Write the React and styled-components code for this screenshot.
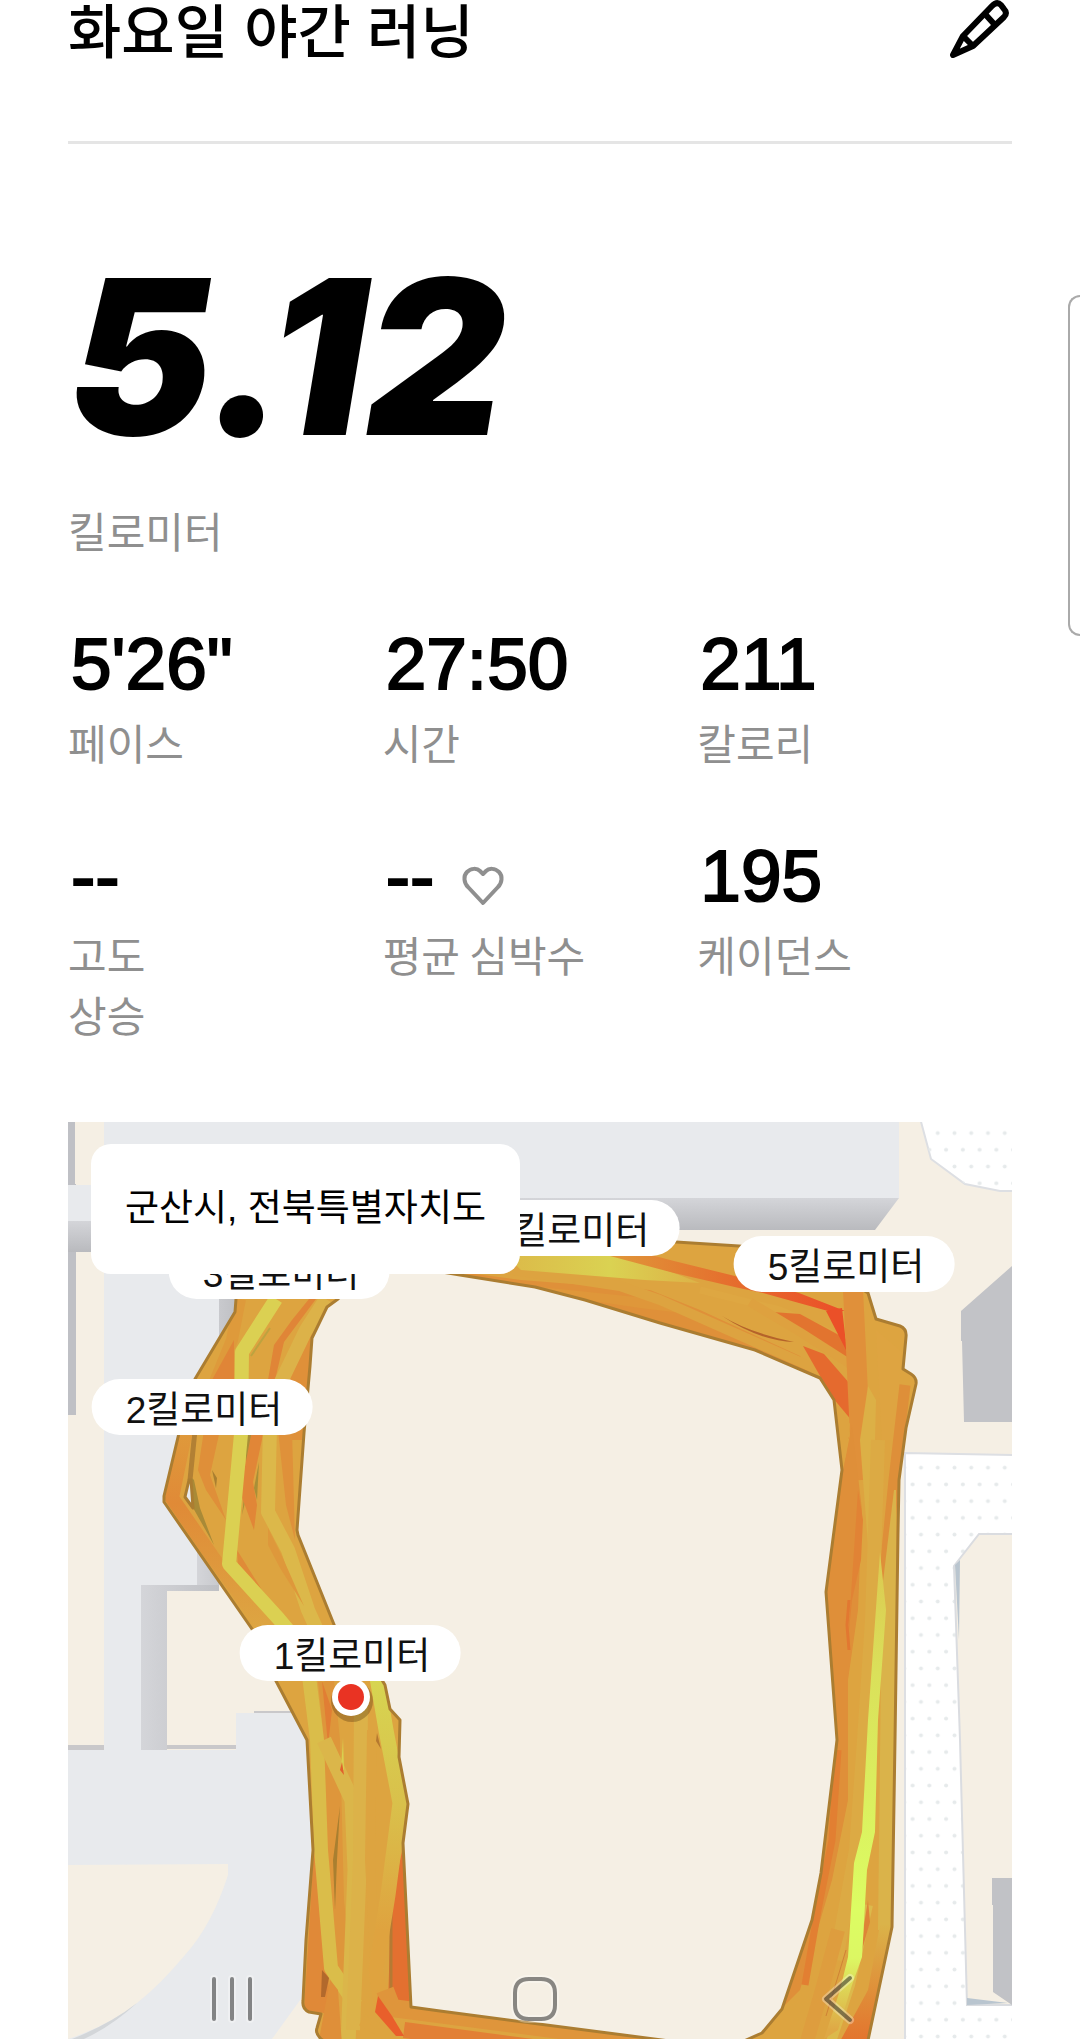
import React from 'react';
import styled, { createGlobalStyle } from 'styled-components';

const stats = [
    { label: ['페이스'], value: '5\'26"' },
    { label: ['시간'], value: '27:50' },
    { label: ['칼로리'], value: '211' },
    { label: ['고도', '상승'], value: '--' },
    { label: ['평균 심박수'], value: '--', heart: true },
    { label: ['케이던스'], value: '195' },
];

// centre of every distance flag on the map, in map units
const MAP_WIDTH = 944;
const MAP_HEIGHT = 917;
const flags = [
    { text: '1킬로미터', x: 282, y: 531 },
    { text: '2킬로미터', x: 134, y: 285 },
    { text: '3킬로미터', x: 211, y: 149 },
    { text: '4킬로미터', x: 501, y: 106 },
    { text: '5킬로미터', x: 776, y: 142 },
];

export default function App() {
    return (
        <Page>
            <GlobalStyle />
            <Header>
                <Title>화요일 야간 러닝</Title>
                <EditButton type="button" aria-label="이름 수정">
                    <PencilIcon />
                </EditButton>
            </Header>
            <Summary>
                <Distance>5.12</Distance>
                <Label>킬로미터</Label>
            </Summary>
            <StatGrid>
                {stats.map((stat) => (
                    <Stat key={stat.label[0]}>
                        <Value>
                            {stat.value}
                            {stat.heart && <HeartIcon />}
                        </Value>
                        {stat.label.map((line) => (
                            <Label key={line}>{line}</Label>
                        ))}
                    </Stat>
                ))}
            </StatGrid>
            <MapBox>
                <RouteMap />
                {flags.map((flag) => (
                    <Flag
                        key={flag.text}
                        style={{
                            left: `${(flag.x / MAP_WIDTH) * 100}%`,
                            top: `${(flag.y / MAP_HEIGHT) * 100}%`,
                        }}
                    >
                        {flag.text}
                    </Flag>
                ))}
                <Place>군산시, 전북특별자치도</Place>
            </MapBox>
            <EdgeHandle />
            <NavBar>
                <NavButton type="button" aria-label="최근 앱">
                    <svg width="48" height="52" viewBox="0 0 48 52">
                        <NavHalo d="M6 6v40M24 6v40M42 6v40" />
                        <NavStroke d="M6 6v40M24 6v40M42 6v40" />
                    </svg>
                </NavButton>
                <NavButton type="button" aria-label="홈">
                    <svg width="52" height="52" viewBox="0 0 52 52">
                        <NavHalo d="M20 6h12q14 0 14 14v12q0 14 -14 14h-12q-14 0 -14 -14v-12q0 -14 14 -14z" />
                        <NavStroke d="M20 6h12q14 0 14 14v12q0 14 -14 14h-12q-14 0 -14 -14v-12q0 -14 14 -14z" />
                    </svg>
                </NavButton>
                <NavButton type="button" aria-label="뒤로">
                    <svg width="40" height="52" viewBox="0 0 40 52">
                        <NavHalo d="M32 5 8 26l24 21" />
                        <NavStroke d="M32 5 8 26l24 21" />
                    </svg>
                </NavButton>
            </NavBar>
        </Page>
    );
}

function PencilIcon() {
    return (
        <svg width="64" height="60" viewBox="948 -2 64 60" fill="none" stroke="#000" strokeWidth="6" strokeLinejoin="round">
            <path d="M953 53 963 34 992 4Q997 -1 1001 3L1004 7Q1008 11 1004 15L973 44Z" />
            <path d="M985 12l10 11M963 34l10 10" />
        </svg>
    );
}

function HeartIcon() {
    return (
        <svg width="42" height="40" viewBox="0 0 42 40" fill="none" stroke="#8f8f8f" strokeWidth="4" strokeLinejoin="round">
            <path d="M21 37 6 21C2 17 1 10 5 6C9 2 15 2 18 5L21 8L24 5C27 2 33 2 37 6C41 10 40 17 36 21Z" />
        </svg>
    );
}

const ROUTE_OUTER =
    'M236 1299 245 1262 420 1225 676 1242 739 1246 800 1250 868 1293 876 1319 900 1326Q907 1329 906 1337L903 1369 911 1374Q917 1378 916 1384L906 1428 899 1480 898 1533 895 1740 892 1927 867 2045 330 2045 321 2039Q315 2033 317 2028L321 2014 309 2012Q302 2009 303 2001L306 1940 313 1850 307 1740 276 1681 252 1629 164 1502 164 1496 179 1433 195 1379 235 1312Z';
const ROUTE_INNER =
    'M338 1299 370 1270 430 1270 460 1275 535 1287 585 1300 660 1323 755 1350 820 1378 834 1400 842 1470 826 1592 837 1740 835 1757 821 1873 812 1920 782 2009 762 2033 735 2045 700 2045 440 2011 411 2007 403 1843 408 1804 399 1757 400 1720 390 1709 385 1685 370 1660 335 1627 298 1535 297 1530 304 1433 310 1366 312 1338 327 1307Z';
const ROUTE_GAP = 'M189 1480 185 1497 193 1508 191 1480Z';

function RouteMap() {
    return (
        <MapSvg viewBox="68 1122 944 917" aria-hidden="true">
            <defs>
                <pattern id="dots" x="912.6" y="1459.3" width="16.75" height="33.46" patternUnits="userSpaceOnUse">
                    <circle cx="8.4" cy="8.4" r="2" fill="#e6eaeb" />
                    <circle cx="0" cy="25.1" r="2" fill="#e6eaeb" />
                    <circle cx="16.75" cy="25.1" r="2" fill="#e6eaeb" />
                </pattern>
                <linearGradient id="wallDown" x1="0" y1="0" x2="0" y2="1">
                    <stop offset="0" stopColor="#d4d5d9" />
                    <stop offset="1" stopColor="#b9babe" />
                </linearGradient>
                <linearGradient id="wallRight" x1="0" y1="0" x2="1" y2="0">
                    <stop offset="0" stopColor="#d4d5d9" />
                    <stop offset="1" stopColor="#bfc0c4" />
                </linearGradient>
                <linearGradient id="limeFade" gradientUnits="userSpaceOnUse" x1="0" y1="1552" x2="0" y2="2030">
                    <stop offset="0" stopColor="#dcc850" />
                    <stop offset="0.25" stopColor="#dae05a" />
                    <stop offset="0.75" stopColor="#dcfd63" />
                    <stop offset="0.85" stopColor="#dcf763" />
                    <stop offset="1" stopColor="#dfa845" />
                </linearGradient>
                <linearGradient id="rightFade" gradientUnits="userSpaceOnUse" x1="0" y1="1920" x2="0" y2="2039">
                    <stop offset="0" stopColor="#dab54a" />
                    <stop offset="1" stopColor="#e3752e" />
                </linearGradient>
                <linearGradient id="topFade" gradientUnits="userSpaceOnUse" x1="600" y1="0" x2="850" y2="0">
                    <stop offset="0" stopColor="#df9a3a" />
                    <stop offset="0.5" stopColor="#e5702e" />
                    <stop offset="1" stopColor="#ec4c28" />
                </linearGradient>
                <linearGradient id="yellowFade" gradientUnits="userSpaceOnUse" x1="500" y1="0" x2="700" y2="0">
                    <stop offset="0" stopColor="#dcb848" />
                    <stop offset="0.55" stopColor="#dad252" />
                    <stop offset="1" stopColor="#ddb247" />
                </linearGradient>
                <linearGradient id="leftFade" gradientUnits="userSpaceOnUse" x1="0" y1="1430" x2="0" y2="1640">
                    <stop offset="0" stopColor="#df9a3b" />
                    <stop offset="0.35" stopColor="#e08a37" />
                    <stop offset="1" stopColor="#dda843" />
                </linearGradient>
                <linearGradient id="eastFade" gradientUnits="userSpaceOnUse" x1="0" y1="1680" x2="0" y2="1930">
                    <stop offset="0" stopColor="#d7d551" />
                    <stop offset="0.5" stopColor="#d9c04b" />
                    <stop offset="1" stopColor="#dfa33f" />
                </linearGradient>
                <clipPath id="routeClip">
                    <path clipRule="evenodd" d={`${ROUTE_OUTER}${ROUTE_INNER}${ROUTE_GAP}`} />
                </clipPath>
            </defs>

            <rect x="68" y="1122" width="944" height="917" fill="#f5efe4" />

            {/* buildings and the yard on the west side */}
            <g fill="#e8eaed">
                <path d="M104 1122H899V1198H219V1585H141V1750H236V1713H311V1985L272 2039H68V1750H104Z" />
                <path d="M68 1185H104V1221H68Z" />
            </g>
            <path d="M899 1198 875 1230H219V1198Z" fill="url(#wallDown)" />
            <path d="M68 1221H104V1252H68Z" fill="url(#wallDown)" />
            <path d="M68 1122h7v62h1v1h-8zM68 1252h8v163h-8z" fill="#bfc0c5" />
            <path d="M219 1298h18v10l-18 32zM197 1540h22v45h-22z" fill="url(#wallRight)" />
            <path d="M141 1585H219V1591H167V1750H141Z" fill="url(#wallRight)" />
            <path d="M68 1745h36v5h-36zM167 1745h69v4h-69zM254 1711h45v2h-45z" fill="#c9c8ca" />
            <path d="M68 1865 228 1864V1875Q212 1925 185 1955Q160 1985 137 2003Q110 2025 68 2039Z" fill="#f5efe4" />
            <path d="M137 2003Q110 2024 72 2039H84Q112 2026 137 2003Z" fill="#d3d6d9" />

            {/* dotted lots and buildings on the east side */}
            <g fill="#fff" stroke="#dddfe3" strokeWidth="2">
                <path d="M920 1118 931 1159 965 1184 1000 1191 1016 1191V1118Z" />
                <path d="M905 1453 1016 1455V2043H905Z" />
            </g>
            <path d="M921 1122 931 1159 965 1184 1000 1191H1012V1122ZM906 1455H1012V2039H906Z" fill="url(#dots)" />
            <path d="M1016 1534H979L954 1566 960 1740 967 2005H1016Z" fill="#f5efe4" stroke="#dadce0" strokeWidth="2" />
            <path d="M955 1565 960 1560 959 1640ZM967 1998 1008 2003 967 2005Z" fill="#b9c5cf" />
            <path d="M1012 1266 961 1311V1341H962L964 1422H1012Z" fill="#c2c3c7" />
            <path d="M1012 1878H992V1905H993V1992L1012 2005Z" fill="#c1c2c6" />

            {/* the run itself: overlapping laps coloured by speed */}
            <g clipPath="url(#routeClip)" fill="none" strokeLinejoin="round">
                <rect x="150" y="1220" width="780" height="830" fill="#dda440" />

                <path d="M460 1272 521 1280 650 1290 700 1310 800 1356 850 1440 810 1400 750 1356 520 1296Z" fill="#df9039" />
                <path d="M521 1285 655 1299 690 1314 640 1308 560 1296Z" fill="#df973a" />
                <path d="M460 1262 620 1286 660 1300 850 1384" stroke="#dda340" strokeWidth="10" />
                <path d="M500 1250H610L674 1273 700 1283 645 1280 521 1270Z" fill="url(#yellowFade)" />
                <path d="M610 1256H655L674 1261 739 1277 799 1293 845 1311 828 1311 799 1303 763 1293 739 1288 674 1273Z" fill="url(#topFade)" />
                <path d="M700 1290 780 1310 834 1334" stroke="#dea742" strokeWidth="7" />
                <path d="M772 1312 800 1314 848 1340V1360L820 1346Z" fill="#e2742f" />
                <path d="M750 1302 800 1332 850 1364" stroke="#dea13f" strokeWidth="9" />
                <path d="M722 1316Q750 1333 794 1342Q760 1341 722 1316Z" fill="#b5632a" />
                <path d="M803 1346 824 1354 850 1384 853 1422 832 1397Z" fill="#e56a2e" />
                <path d="M826 1311 842 1308 847 1352 844 1346Z" fill="#eb5028" />
                <path d="M853 1290 856 1350 862 1480" stroke="#e0903a" strokeWidth="20" />
                <path d="M876 1330 902 1352 896 1440 882 1440Z" fill="#dea441" />
                <path d="M905 1385 894 1480 884 1580" stroke="#de8f39" strokeWidth="11" />
                <path d="M868 1386 876 1400 874 1480 868 1545 860 1440Z" fill="#dcb046" />

                <path d="M852 1425 862 1510 858 1610 848 1680 848 1800 832 1880 800 1990 780 2010 812 1900 835 1740 826 1592 843 1470Z" fill="#df8f39" />
                <path d="M836 1402 850 1424 846 1455 842 1470Z" fill="#dda340" />
                <path d="M858 1490 863 1520 861 1560 852 1600 848 1640 852 1580Z" fill="#e18335" />
                <path d="M849 1600 847 1625 849 1650" stroke="#e27831" strokeWidth="3" />
                <path d="M838 1750 832 1840 818 1910 805 1985" stroke="#e27f32" strokeWidth="7" />
                <path d="M894 1490 882 1590 878 1930H896V1490Z" fill="#dab34a" />
                <path d="M878 1440 872 1620 864 1740 856 1850 836 1960" stroke="#dcaa44" strokeWidth="14" />
                <path d="M894 1925 868 2045H838L868 1990 880 1925Z" fill="url(#rightFade)" />
                <path d="M838 1930 822 1990 806 2045" stroke="#de9d3e" strokeWidth="14" />
                <path d="M868 1905 850 1985 830 2045" stroke="#dcb94b" strokeWidth="10" />
                <path d="M868 1900 870 1922 862 1950 864 1925Z" fill="#de8436" />
                <path d="M846 1950 826 2016" stroke="#cf8236" strokeWidth="1" />
                <path d="M880 1552 886 1610 878 1720 875 1832 867 1870 862 1957 852 1985 838 2030 824 2039 840 1990 848 1957 854 1863 862 1832 868 1720Z" fill="url(#limeFade)" />

                <path d="M240 1299 232 1340 214 1384" stroke="#de9a3b" strokeWidth="12" />
                <path d="M234 1340V1380H212Z" fill="#e08537" />
                <path d="M309 1299 316 1299 284 1342 275 1380H268L274 1345 292 1320Z" fill="#e08537" />
                <path d="M312 1330 310 1440 284 1440 288 1370Z" fill="#df9039" />
                <path d="M326 1299 306 1330 280 1384" stroke="#dcb249" strokeWidth="14" />
                <path d="M204 1430H220L210 1475 226 1520 206 1490 198 1470Z" fill="#df8f39" />
                <path d="M212 1470 217 1478 216 1488Z" fill="#a97f30" />
                <path d="M195 1430 190 1480" stroke="#b28034" strokeWidth="5" />
                <path d="M192 1478V1506L214 1545 200 1508 194 1480Z" fill="#a98a37" />
                <path d="M187 1425 172 1498 212 1556 262 1625" stroke="url(#leftFade)" strokeWidth="14" />
                <path d="M246 1430V1480L242 1515 248 1490 252 1430Z" fill="#a98f37" />
                <path d="M252 1430H264L253 1482 257 1505 254 1530 240 1492Z" fill="#e18637" />
                <path d="M259 1462 254 1488 257 1500Z" fill="#a98f37" />
                <path d="M270 1425 268 1512 288 1550 308 1610 326 1650" stroke="#dcb84a" strokeWidth="14" />
                <path d="M278 1430H292L295 1540 286 1505Z" fill="#df913a" />
                <path d="M268 1528 282 1556 304 1606 280 1568 268 1545Z" fill="#de983b" />
                <path d="M237 1550 262 1590 238 1566Z" fill="#e08b38" />
                <path d="M276 1299 242 1352 241 1434 229 1564 278 1618 330 1680" stroke="#dbd052" strokeWidth="14" />
                <path d="M251 1356 270 1328" stroke="#bda33f" strokeWidth="2" />

                <path d="M314 1850 304 2010 330 2014 325 1900Z" fill="#e08938" />
                <path d="M404 1843 411 2010 388 2008 391 1900Z" fill="#e37030" />
                <path d="M391 1900 391 1998" stroke="#b57a33" strokeWidth="3" />
                <path d="M326 1681 332 1740 336 1900 345 1990" stroke="#de963b" strokeWidth="16" />
                <path d="M322 1681 332 1710 328 1745Z" fill="#e17e34" />
                <path d="M340 1806 337 1860 335 1910 333 1860Z" fill="#a97f30" />
                <path d="M307 1660 317 1740 321 1850 331 1968 356 2005" stroke="#dabd4a" strokeWidth="14" />
                <path d="M324 1740 352 1800 355 1870 348 2045" stroke="#dbb64a" strokeWidth="15" />
                <path d="M361 1700 360 1860 353 2030" stroke="#dcb249" strokeWidth="14" />
                <path d="M372 1730 370 1860 376 1980" stroke="#dda440" strokeWidth="10" />
                <path d="M374 1660 386 1730 400 1803 388 1895 376 1970 381 2005" stroke="url(#eastFade)" strokeWidth="15" />
                <path d="M343 1738 344 1770 341 1770Z" fill="#d9d04f" />
                <path d="M342 1762 344 1775 340 1770Z" fill="#e2602c" />
                <path d="M377 1733 381 1749 376 1741Z" fill="#b5782f" />
                <path d="M322 1970 329 1978 325 1997H321Z" fill="#b2692c" />

                <path d="M330 1980 318 2045H342L338 1990Z" fill="#df8f39" />
                <path d="M385 1990 392 2008 560 2030 740 2060" stroke="#df953b" strokeWidth="18" />
                <path d="M404 2030 540 2048" stroke="#e28035" strokeWidth="16" />
                <path d="M362 2020 400 2042" stroke="#dda440" strokeWidth="12" />
                <path d="M378 1996 392 2016 404 2036H396L375 2012Z" fill="#e95f2b" />
            </g>
            <path d={`${ROUTE_OUTER}${ROUTE_INNER}${ROUTE_GAP}`} fill="none" stroke="#ab7d31" strokeWidth="3" strokeLinejoin="round" />

            <circle cx="352" cy="1701" r="21" fill="#5a3a10" opacity="0.35" />
            <circle cx="351" cy="1697" r="19" fill="#fff" />
            <circle cx="351" cy="1697" r="13" fill="#e93323" />
        </MapSvg>
    );
}

const GlobalStyle = createGlobalStyle`
    * {
        box-sizing: border-box;
    }

    body {
        margin: 0;
        background: #fff;
        color: #000;
        font-family: "Liberation Sans", "Noto Sans CJK KR", sans-serif;
    }
`;

const Page = styled.main`
    position: relative;
    padding: 0 68px;
    overflow: hidden;
`;

const Header = styled.header`
    display: flex;
    justify-content: space-between;
    align-items: flex-start;
    padding-bottom: 75px;
    border-bottom: 3px solid #e5e5e5;
`;

const Title = styled.h1`
    margin: 0;
    font-size: 58px;
    font-weight: 500;
    line-height: 66px;
`;

const EditButton = styled.button`
    display: flex;
    padding: 0;
    border: 0;
    background: none;
`;

const Summary = styled.section`
    padding-top: 108px;
`;

const Distance = styled.p`
    margin: 0 0 38px;
    font-family: Inter, sans-serif;
    font-size: 216px;
    font-style: italic;
    font-weight: 900;
    line-height: 210px;
`;

const Label = styled.p`
    margin: 0;
    color: #8f8f8f;
    font-family: "Noto Sans CJK KR", sans-serif;
    font-size: 42px;
    line-height: 60px;
`;

const StatGrid = styled.section`
    display: grid;
    grid-template-columns: repeat(3, 1fr);
    row-gap: 66px;
    padding: 66px 0 78px;
`;

const Stat = styled.div`
    display: flex;
    flex-direction: column;
`;

const Value = styled.p`
    display: flex;
    align-items: center;
    gap: 28px;
    margin: 0 0 10px;
    padding-left: 3px;
    font-size: 73px;
    line-height: 76px;
    -webkit-text-stroke: 2px #000;

    svg {
        margin-top: 20px;
    }
`;

const MapBox = styled.section`
    position: relative;
    overflow: hidden;
`;

const MapSvg = styled.svg`
    display: block;
    width: 100%;
    height: auto;
`;

const Flag = styled.span`
    position: absolute;
    padding: 8px 30px 0 34px;
    border-radius: 28px;
    background: #fff;
    color: #111;
    font-size: 37px;
    line-height: 48px;
    white-space: nowrap;
    transform: translate(-50%, -50%);
`;

const Place = styled.div`
    position: absolute;
    top: 22px;
    left: 23px;
    padding: 0 34px;
    border-radius: 20px;
    background: #fff;
    font-size: 37px;
    line-height: 130px;
    white-space: nowrap;
`;

const EdgeHandle = styled.div`
    position: absolute;
    top: 295px;
    right: 0;
    width: 12px;
    height: 341px;
    border: 2px solid #aaa;
    border-right: 0;
    border-radius: 12px 0 0 12px;
`;

const NavBar = styled.nav`
    position: fixed;
    right: 0;
    bottom: 0;
    left: 0;
    display: grid;
    grid-template-columns: repeat(3, 1fr);
    justify-items: center;
    padding: 0 90px 14px 80px;
`;

const NavButton = styled.button`
    display: flex;
    padding: 0;
    border: 0;
    background: none;
`;

const NavStroke = styled.path`
    fill: none;
    stroke: rgba(0, 0, 0, 0.45);
    stroke-width: 4px;
    stroke-linecap: round;
    stroke-linejoin: round;
`;

const NavHalo = styled(NavStroke)`
    stroke: rgba(255, 255, 255, 0.3);
    stroke-width: 8px;
`;
